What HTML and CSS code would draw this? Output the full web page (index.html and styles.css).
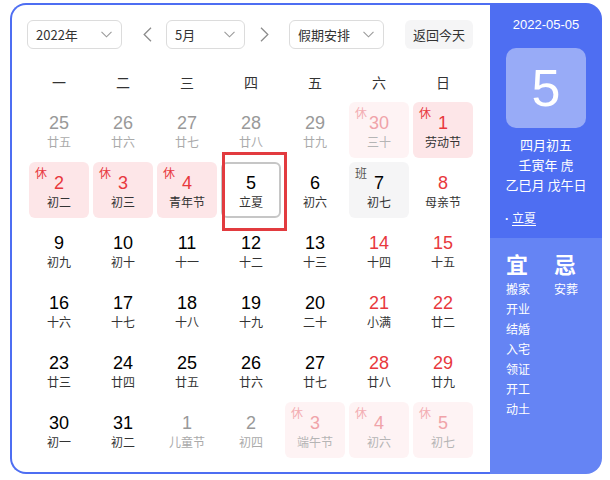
FILE: index.html
```html
<!DOCTYPE html>
<html lang="zh">
<head>
<meta charset="utf-8">
<title>万年历</title>
<link rel="stylesheet" href="styles.css">
</head>
<body>
<div class="cal">
  <div class="main">
    <div class="bar">
      <div class="sel sel-year"><span>2022年</span><svg class="chev" width="11" height="7" viewBox="0 0 11 7"><polyline points="0.5,0.8 5.5,5.8 10.5,0.8" fill="none" stroke="#9a9a9a" stroke-width="1.1"/></svg></div>
      <div class="arrow arrow-prev"><svg width="9" height="15" viewBox="0 0 9 15"><polyline points="8,0.8 1.2,7.5 8,14.2" fill="none" stroke="#8c8c8c" stroke-width="1.3"/></svg></div>
      <div class="sel sel-month"><span>5月</span><svg class="chev" width="11" height="7" viewBox="0 0 11 7"><polyline points="0.5,0.8 5.5,5.8 10.5,0.8" fill="none" stroke="#9a9a9a" stroke-width="1.1"/></svg></div>
      <div class="arrow arrow-next"><svg width="9" height="15" viewBox="0 0 9 15"><polyline points="1,0.8 7.8,7.5 1,14.2" fill="none" stroke="#8c8c8c" stroke-width="1.3"/></svg></div>
      <div class="sel sel-hol"><span>假期安排</span><svg class="chev" width="11" height="7" viewBox="0 0 11 7"><polyline points="0.5,0.8 5.5,5.8 10.5,0.8" fill="none" stroke="#9a9a9a" stroke-width="1.1"/></svg></div>
      <div class="today-btn">返回今天</div>
    </div>
    <div class="week">
      <div>一</div><div>二</div><div>三</div><div>四</div><div>五</div><div>六</div><div>日</div>
    </div>
    <div class="days">
      <div class="cell other"><div class="num">25</div><div class="lun">廿五</div></div>
      <div class="cell other"><div class="num">26</div><div class="lun">廿六</div></div>
      <div class="cell other"><div class="num">27</div><div class="lun">廿七</div></div>
      <div class="cell other"><div class="num">28</div><div class="lun">廿八</div></div>
      <div class="cell other"><div class="num">29</div><div class="lun">廿九</div></div>
      <div class="cell rest faded"><span class="tag">休</span><div class="num">30</div><div class="lun">三十</div></div>
      <div class="cell rest"><span class="tag">休</span><div class="num">1</div><div class="lun">劳动节</div></div>

      <div class="cell rest"><span class="tag">休</span><div class="num">2</div><div class="lun">初二</div></div>
      <div class="cell rest"><span class="tag">休</span><div class="num">3</div><div class="lun">初三</div></div>
      <div class="cell rest"><span class="tag">休</span><div class="num">4</div><div class="lun">青年节</div></div>
      <div class="cell today"><div class="num">5</div><div class="lun">立夏</div></div>
      <div class="cell"><div class="num">6</div><div class="lun">初六</div></div>
      <div class="cell work"><span class="tag">班</span><div class="num">7</div><div class="lun">初七</div></div>
      <div class="cell wkd"><div class="num">8</div><div class="lun">母亲节</div></div>

      <div class="cell"><div class="num">9</div><div class="lun">初九</div></div>
      <div class="cell"><div class="num">10</div><div class="lun">初十</div></div>
      <div class="cell"><div class="num">11</div><div class="lun">十一</div></div>
      <div class="cell"><div class="num">12</div><div class="lun">十二</div></div>
      <div class="cell"><div class="num">13</div><div class="lun">十三</div></div>
      <div class="cell wkd"><div class="num">14</div><div class="lun">十四</div></div>
      <div class="cell wkd"><div class="num">15</div><div class="lun">十五</div></div>

      <div class="cell"><div class="num">16</div><div class="lun">十六</div></div>
      <div class="cell"><div class="num">17</div><div class="lun">十七</div></div>
      <div class="cell"><div class="num">18</div><div class="lun">十八</div></div>
      <div class="cell"><div class="num">19</div><div class="lun">十九</div></div>
      <div class="cell"><div class="num">20</div><div class="lun">二十</div></div>
      <div class="cell wkd"><div class="num">21</div><div class="lun">小满</div></div>
      <div class="cell wkd"><div class="num">22</div><div class="lun">廿二</div></div>

      <div class="cell"><div class="num">23</div><div class="lun">廿三</div></div>
      <div class="cell"><div class="num">24</div><div class="lun">廿四</div></div>
      <div class="cell"><div class="num">25</div><div class="lun">廿五</div></div>
      <div class="cell"><div class="num">26</div><div class="lun">廿六</div></div>
      <div class="cell"><div class="num">27</div><div class="lun">廿七</div></div>
      <div class="cell wkd"><div class="num">28</div><div class="lun">廿八</div></div>
      <div class="cell wkd"><div class="num">29</div><div class="lun">廿九</div></div>

      <div class="cell"><div class="num">30</div><div class="lun">初一</div></div>
      <div class="cell"><div class="num">31</div><div class="lun">初二</div></div>
      <div class="cell other"><div class="num">1</div><div class="lun">儿童节</div></div>
      <div class="cell other"><div class="num">2</div><div class="lun">初四</div></div>
      <div class="cell rest faded"><span class="tag">休</span><div class="num">3</div><div class="lun">端午节</div></div>
      <div class="cell rest faded"><span class="tag">休</span><div class="num">4</div><div class="lun">初六</div></div>
      <div class="cell rest faded"><span class="tag">休</span><div class="num">5</div><div class="lun">初七</div></div>
    </div>
  </div>
  <div class="side">
    <div class="side-top">
      <div class="date">2022-05-05</div>
      <div class="big">5</div>
      <div class="info">四月初五</div>
      <div class="info">壬寅年 虎</div>
      <div class="info">乙巳月 戊午日</div>
      <div class="fest"><span class="dot">·</span><span class="fest-link">立夏</span></div>
    </div>
    <div class="side-bottom">
      <div class="col">
        <div class="head">宜</div>
        <div class="item">搬家</div>
        <div class="item">开业</div>
        <div class="item">结婚</div>
        <div class="item">入宅</div>
        <div class="item">领证</div>
        <div class="item">开工</div>
        <div class="item">动土</div>
      </div>
      <div class="col">
        <div class="head">忌</div>
        <div class="item">安葬</div>
      </div>
    </div>
  </div>
</div>
<div class="mark"></div>
</body>
</html>
```
FILE: styles.css
```css
html, body {
  margin: 0;
  padding: 0;
  background: #fff;
}
body {
  font-family: "Liberation Sans", "Noto Sans CJK SC", Arial, sans-serif;
  color: #333;
  position: relative;
}
.cal {
  display: flex;
  margin: 3px 0 0 10px;
  width: 592px;
  height: 471px;
}
.main {
  box-sizing: border-box;
  width: 480px;
  height: 471px;
  border: 2px solid #4e6ef2;
  border-right: none;
  border-radius: 16px 0 0 16px;
  padding: 15px 0 0 15px;
}
.bar {
  display: flex;
  align-items: center;
  height: 29px;
}
.sel {
  box-sizing: border-box;
  height: 29px;
  border: 1px solid #dcdcdc;
  border-radius: 6px;
  display: flex;
  align-items: center;
  justify-content: space-between;
  padding: 0 9px 0 8px;
  font-family: "Noto Sans CJK SC", sans-serif;
  font-size: 13px;
  color: #333;
}
.sel-year { width: 95px; }
.sel-month { width: 79px; }
.sel-hol { width: 95px; }
.chev { display: block; }
.arrow {
  display: flex;
  align-items: center;
  justify-content: center;
  width: 12px;
  height: 29px;
}
.arrow svg { display: block; }
.arrow-prev { margin: 0 13px 0 19px; }
.arrow-next { margin: 0 19px 0 13px; }
.today-btn {
  margin-left: 21px;
  width: 68px;
  height: 29px;
  line-height: 29px;
  text-align: center;
  background: #f5f5f6;
  border-radius: 6px;
  font-family: "Noto Sans CJK SC", sans-serif;
  font-size: 13px;
  color: #333;
}
.week {
  display: grid;
  grid-template-columns: repeat(7, 64px);
  margin-top: 15px;
  height: 36px;
  line-height: 36px;
  text-align: center;
  font-family: "Noto Sans CJK SC", sans-serif;
  font-size: 14px;
  color: #333;
}
.days {
  display: grid;
  grid-template-columns: repeat(7, 64px);
  grid-auto-rows: 60px;
}
.cell {
  position: relative;
  margin: 2px;
  border-radius: 6px;
  box-sizing: border-box;
  padding-top: 10px;
  text-align: center;
}
.num {
  font-size: 18px;
  line-height: 22px;
  color: #000;
}
.lun {
  font-family: "Noto Sans CJK SC", sans-serif;
  font-size: 12px;
  line-height: 16px;
  color: #333;
}
.tag {
  position: absolute;
  left: 6px;
  top: 4px;
  font-family: "Noto Sans CJK SC", sans-serif;
  font-size: 12px;
  line-height: 14px;
}
.other .num { color: #999; }
.other .lun { color: #aaa; }
.wkd .num { color: #e8383d; }
.rest { background: #fde6e8; }
.rest .num, .rest .tag { color: #e8383d; }
.rest.faded { background: #fef3f4; }
.rest.faded .num { color: #f0a3a9; }
.rest.faded .tag { color: #f3adb2; }
.rest.faded .lun { color: #b5b5b5; }
.work { background: #f5f5f6; }
.work .tag { color: #555; }
.today {
  border: 2px solid #c6c6c6;
  padding-top: 8px;
}
.side {
  width: 112px;
  height: 471px;
  border-radius: 0 16px 16px 0;
  overflow: hidden;
  display: flex;
  flex-direction: column;
  color: #fff;
  font-family: "Noto Sans CJK SC", sans-serif;
}
.side-top {
  background: #4e6ef2;
  height: 235px;
  box-sizing: border-box;
  padding-top: 12px;
  text-align: center;
}
.date {
  font-family: "Liberation Sans", sans-serif;
  font-size: 13px;
  line-height: 20px;
}
.big {
  width: 80px;
  height: 80px;
  margin: 13px auto 0;
  border-radius: 10px;
  background: rgba(255, 255, 255, 0.42);
  font-family: "Liberation Sans", sans-serif;
  font-size: 52px;
  line-height: 80px;
}
.info {
  font-size: 13px;
  line-height: 20px;
}
.big + .info { margin-top: 7px; }
.fest {
  margin-top: 13px;
  padding-left: 15px;
  text-align: left;
  font-size: 12px;
  line-height: 20px;
}
.dot {
  font-family: "Liberation Sans", sans-serif;
  font-weight: bold;
  margin-right: 3px;
}
.fest-link {
  text-decoration: underline;
  text-underline-offset: 2px;
}
.side-bottom {
  flex: 1;
  background: #6584f4;
  display: flex;
  padding: 9px 0 0 16px;
}
.col { width: 56px; }
.head {
  font-size: 22px;
  font-weight: bold;
  line-height: 32px;
  height: 32px;
}
.item {
  font-size: 12px;
  line-height: 20px;
}
.mark {
  position: absolute;
  left: 222px;
  top: 152px;
  width: 65px;
  height: 79px;
  box-sizing: border-box;
  border: 3px solid #e23b3f;
}
```
